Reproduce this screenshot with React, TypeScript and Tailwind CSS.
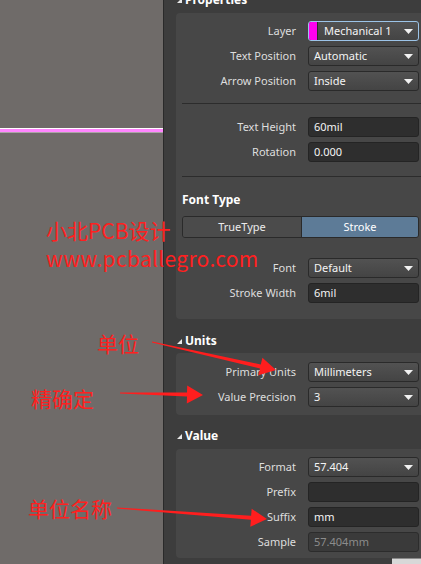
import type { ReactNode } from 'react';

// Altium-style properties panel with red annotation overlay

function Caret() {
  return (
    <svg width="9" height="5" viewBox="0 0 9 5" className="shrink-0">
      <polygon points="0,0 9,0 4.5,5" fill="#f2f2f2" />
    </svg>
  );
}

function Corner() {
  return (
    <svg width="5" height="5" viewBox="0 0 5 5" className="shrink-0">
      <polygon points="5,0 5,5 0,5" fill="#e8e8e8" />
    </svg>
  );
}

function Row({ label, children }: { label: string; children: ReactNode }) {
  return (
    <div className="flex h-[20px] items-center">
      <span className="w-[120px] shrink-0 text-right text-[11px] text-[#dedede]">{label}</span>
      <div className="ml-[12px] w-[111px] shrink-0">{children}</div>
    </div>
  );
}

function Dropdown({ value, swatch, focused }: { value: string; swatch?: string; focused?: boolean }) {
  return (
    <div
      className={`flex h-[20px] items-center overflow-hidden rounded-[3px] border bg-gradient-to-b from-[#525252] to-[#444444] pr-[5px] ${
        focused ? 'border-[#9cc4e8]' : 'border-[#2a2a2a]'
      }`}
    >
      {swatch && <span className="h-full w-[9px] shrink-0 border-r border-[#2a2a2a] bg-[#ff00f0]" />}
      <span className={`flex-1 truncate text-[11px] text-[#f4f4f4] ${swatch ? 'pl-[6px]' : 'pl-[5px]'}`}>{value}</span>
      <Caret />
    </div>
  );
}

function Field({ value, muted }: { value?: string; muted?: boolean }) {
  return (
    <div
      className={`flex h-[20px] items-center rounded-[3px] border pl-[5px] text-[11px] ${
        muted ? 'border-[#2c2c2c] bg-[#3a3a3a] text-[#8c8c8c]' : 'border-[#242424] bg-[#2e2e2e] text-[#f4f4f4]'
      }`}
    >
      {value}
    </div>
  );
}

function SectionHead({ title }: { title: string }) {
  return (
    <div className="flex h-[16px] items-center gap-[3px] pl-[1px]">
      <Corner />
      <span className="text-[12px] font-bold text-white">{title}</span>
    </div>
  );
}

function Separator() {
  return <div className="ml-[6px] h-px bg-[#2c2c2c]" />;
}

export default function App() {
  return (
    <div className="relative flex h-[564px] w-[421px] overflow-hidden font-['Noto_Sans',sans-serif]">
      {/* canvas */}
      <div className="flex w-[163px] shrink-0 flex-col bg-[#6f6b69]">
        <div className="h-[128px]" />
        <div className="h-px bg-white" />
        <div className="h-[3px] bg-[#ff85ff]" />
        <div className="h-px bg-[#aaa4a4]" />
      </div>
      <div className="w-px shrink-0 bg-[#2a2a2a]" />

      {/* panel */}
      <div className="flex flex-1 flex-col bg-[#3d3d3d] pl-[12px]">
        {/* header is scrolled mostly out of view */}
        <div className="flex h-[13px] items-end gap-[3px] overflow-hidden pl-[1px]">
          <div className="mb-[10px]">
            <Corner />
          </div>
          <span className="mb-[7px] text-[12px] font-bold leading-[12px] text-white">Properties</span>
        </div>

        <div className="-mr-[6px] rounded-[4px] bg-[#474747] pb-[16px] pt-[8px]">
          <div className="flex flex-col gap-[5px]">
            <Row label="Layer">
              <Dropdown value="Mechanical 1" swatch="#ff00f0" focused />
            </Row>
            <Row label="Text Position">
              <Dropdown value="Automatic" />
            </Row>
            <Row label="Arrow Position">
              <Dropdown value="Inside" />
            </Row>
          </div>
          <div className="mt-[12px]">
            <Separator />
          </div>
          <div className="mt-[13px] flex flex-col gap-[5px]">
            <Row label="Text Height">
              <Field value="60mil" />
            </Row>
            <Row label="Rotation">
              <Field value="0.000" />
            </Row>
          </div>
          <div className="mt-[14px]">
            <Separator />
          </div>
          <div className="ml-[6px] mt-[15px] flex h-[16px] items-center text-[12px] font-bold text-white">Font Type</div>
          <div className="ml-[6px] mt-[8px] flex h-[22px] w-[237px] overflow-hidden rounded-[3px] border border-[#2a2a2a] text-[11px]">
            <div className="flex w-[119px] items-center justify-center border-r border-[#2a2a2a] bg-[#4b4b4b] text-[#ececec]">
              TrueType
            </div>
            <div className="flex flex-1 items-center justify-center bg-[#5d7b97] text-white">Stroke</div>
          </div>
          <div className="mt-[20px] flex flex-col gap-[5px]">
            <Row label="Font">
              <Dropdown value="Default" />
            </Row>
            <Row label="Stroke Width">
              <Field value="6mil" />
            </Row>
          </div>
        </div>

        <div className="mt-[14px]">
          <SectionHead title="Units" />
        </div>
        <div className="-mr-[6px] mt-[4px] flex flex-col gap-[5px] rounded-[4px] bg-[#474747] pb-[8px] pt-[9px]">
          <Row label="Primary Units">
            <Dropdown value="Millimeters" />
          </Row>
          <Row label="Value Precision">
            <Dropdown value="3" />
          </Row>
        </div>

        <div className="mt-[13px]">
          <SectionHead title="Value" />
        </div>
        <div className="-mr-[6px] mt-[5px] flex flex-col gap-[5px] rounded-[4px] bg-[#474747] pb-[6px] pt-[8px]">
          <Row label="Format">
            <Dropdown value="57.404" />
          </Row>
          <Row label="Prefix">
            <Field />
          </Row>
          <Row label="Suffix">
            <Field value="mm" />
          </Row>
          <Row label="Sample">
            <Field value="57.404mm" muted />
          </Row>
        </div>
        <div className="ml-auto h-[6px] w-[29px] border-t border-[#8a8a8a] bg-[#d8d8d8]" />
      </div>

      {/* annotations */}
      <div className="pointer-events-none absolute inset-0 font-['Noto_Sans_CJK_SC',sans-serif] text-[21px] font-normal leading-none text-[#ff2020]">
        <span className="absolute left-[46px] top-[220px] whitespace-nowrap">小北PCB设计</span>
        <span className="absolute left-[46px] top-[248px] whitespace-nowrap tracking-[0.3px]">www.pcballegro.com</span>
        <span className="absolute left-[97px] top-[333px] whitespace-nowrap">单位</span>
        <span className="absolute left-[31px] top-[388px] whitespace-nowrap">精确定</span>
        <span className="absolute left-[28px] top-[498px] whitespace-nowrap">单位名称</span>
        <svg width="421" height="564" className="absolute inset-0">
          <polygon
            points="152.1,341.5 260.8,364.5 262.4,357.7 276,370 258.4,375.3 260.0,368.5 151.9,342.5"
            fill="#ff1e1e"
          />
          <polygon points="120,392.4 187,392.6 187.2,385.6 203,395 186.8,403.6 187,396.6 120,393.6" fill="#ff1e1e" />
          <polygon
            points="117,507.4 251.1,515.8 251.7,508.8 267,519 250.3,526.8 250.9,519.8 117,508.6"
            fill="#ff1e1e"
          />
        </svg>
      </div>
    </div>
  );
}
